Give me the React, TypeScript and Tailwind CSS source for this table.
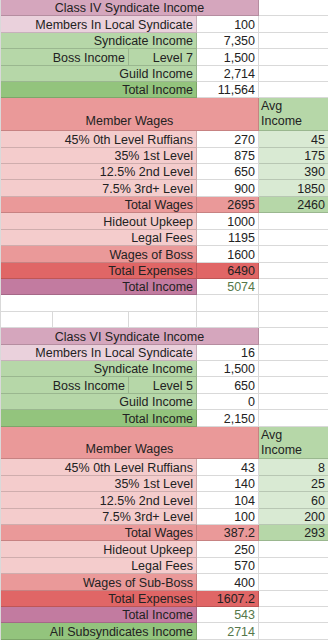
import type { ReactNode } from "react";

const SPAN: Record<number, string> = {
  1: "col-span-1",
  2: "col-span-2",
  3: "col-span-3",
  4: "col-span-4",
  5: "col-span-5",
};

const BG = {
  title: "bg-[#d5a6bd]",
  pink: "bg-[#ead1dc]",
  green: "bg-[#b6d7a8]",
  greenDark: "bg-[#93c47d]",
  greenLight: "bg-[#d9ead3]",
  red: "bg-[#ea9999]",
  redLight: "bg-[#f4cccc]",
  redDark: "bg-[#e06666]",
  purple: "bg-[#c27ba0]",
  white: "bg-white",
};

type CellProps = {
  span?: number;
  tall?: boolean;
  bg?: string;
  align?: "left" | "right" | "center";
  tone?: string;
  children?: ReactNode;
};

function Cell({ span = 1, tall, bg = BG.white, align = "right", tone = "text-[#222]", children }: CellProps) {
  const justify = align === "right" ? "justify-end text-right pr-[3px]" : align === "center" ? "justify-center text-center" : "justify-start text-left pl-[2px]";
  return (
    <div
      className={`${SPAN[span]} ${tall ? "row-span-2" : ""} ${bg} ${justify} ${tone} flex items-end overflow-hidden whitespace-nowrap border-r border-b border-black/15`}
    >
      <span className="leading-[14px]">{children}</span>
    </div>
  );
}

type SectionData = {
  title: string;
  members: string;
  synd: string;
  level: string;
  boss: string;
  guild: string;
  total: string;
  wages: [string, string, string][];
  totalWages: string;
  totalAvg: string;
  hideout: string;
  legal: string;
  bossLabel: string;
  bossWage: string;
  expenses: string;
  net: string;
};

function Section({ d }: { d: SectionData }) {
  return (
    <>
      <Cell span={4} bg={BG.title} align="center">{d.title}</Cell>
      <Cell />

      <Cell span={3} bg={BG.pink}>Members In Local Syndicate</Cell>
      <Cell>{d.members}</Cell>
      <Cell />

      <Cell span={3} bg={BG.green}>Syndicate Income</Cell>
      <Cell>{d.synd}</Cell>
      <Cell />

      <Cell span={2} bg={BG.green}>Boss Income</Cell>
      <Cell bg={BG.green}>{d.level}</Cell>
      <Cell>{d.boss}</Cell>
      <Cell />

      <Cell span={3} bg={BG.green}>Guild Income</Cell>
      <Cell>{d.guild}</Cell>
      <Cell />

      <Cell span={3} bg={BG.greenDark}>Total Income</Cell>
      <Cell>{d.total}</Cell>
      <Cell />

      <div className="col-span-4 row-span-2 flex items-end justify-center border-r border-b border-black/15 bg-[#ea9999] pb-[2px] text-[#222]">
        <span className="leading-[14px]">Member Wages</span>
      </div>
      <div className="row-span-2 flex items-start border-r border-b border-black/15 bg-[#b6d7a8] pl-[2px] pt-[1px] text-[#222]">
        <span className="leading-[15px]">Avg<br />Income</span>
      </div>

      {d.wages.map(([label, val, avg]) => (
        <div key={label} className="contents">
          <Cell span={3} bg={BG.redLight}>{label}</Cell>
          <Cell>{val}</Cell>
          <Cell bg={BG.greenLight}>{avg}</Cell>
        </div>
      ))}

      <Cell span={3} bg={BG.red}>Total Wages</Cell>
      <Cell bg={BG.red}>{d.totalWages}</Cell>
      <Cell bg={BG.green}>{d.totalAvg}</Cell>

      <Cell span={3} bg={BG.redLight}>Hideout Upkeep</Cell>
      <Cell>{d.hideout}</Cell>
      <Cell />

      <Cell span={3} bg={BG.redLight}>Legal Fees</Cell>
      <Cell>{d.legal}</Cell>
      <Cell />

      <Cell span={3} bg={BG.red}>{d.bossLabel}</Cell>
      <Cell>{d.bossWage}</Cell>
      <Cell />

      <Cell span={3} bg={BG.redDark}>Total Expenses</Cell>
      <Cell bg={BG.redDark}>{d.expenses}</Cell>
      <Cell />

      <Cell span={3} bg={BG.purple}>Total Income</Cell>
      <Cell tone="text-[#55774a]">{d.net}</Cell>
      <Cell />
    </>
  );
}

const classIV: SectionData = {
  title: "Class IV Syndicate Income",
  members: "100",
  synd: "7,350",
  level: "Level 7",
  boss: "1,500",
  guild: "2,714",
  total: "11,564",
  wages: [
    ["45% 0th Level Ruffians", "270", "45"],
    ["35% 1st Level", "875", "175"],
    ["12.5% 2nd Level", "650", "390"],
    ["7.5% 3rd+ Level", "900", "1850"],
  ],
  totalWages: "2695",
  totalAvg: "2460",
  hideout: "1000",
  legal: "1195",
  bossLabel: "Wages of Boss",
  bossWage: "1600",
  expenses: "6490",
  net: "5074",
};

const classVI: SectionData = {
  title: "Class VI Syndicate Income",
  members: "16",
  synd: "1,500",
  level: "Level 5",
  boss: "650",
  guild: "0",
  total: "2,150",
  wages: [
    ["45% 0th Level Ruffians", "43", "8"],
    ["35% 1st Level", "140", "25"],
    ["12.5% 2nd Level", "104", "60"],
    ["7.5% 3rd+ Level", "100", "200"],
  ],
  totalWages: "387.2",
  totalAvg: "293",
  hideout: "250",
  legal: "570",
  bossLabel: "Wages of Sub-Boss",
  bossWage: "400",
  expenses: "1607.2",
  net: "543",
};

export default function App() {
  return (
    <div className="h-[640px] w-[328px] overflow-hidden bg-white font-['Liberation_Sans',Arial,sans-serif] text-[12.5px]">
      <div className="grid grid-cols-[52px_76px_68px_62px_70px] auto-rows-[16.41px] border-l border-black/15">
        <Section d={classIV} />

        <Cell span={3} />
        <Cell />
        <Cell />

        <Cell />
        <Cell />
        <Cell />
        <Cell />
        <Cell />

        <Section d={classVI} />

        <Cell span={3} bg={BG.greenDark}>All Subsyndicates Income</Cell>
        <Cell tone="text-[#55774a]">2714</Cell>
        <Cell />
      </div>
    </div>
  );
}
